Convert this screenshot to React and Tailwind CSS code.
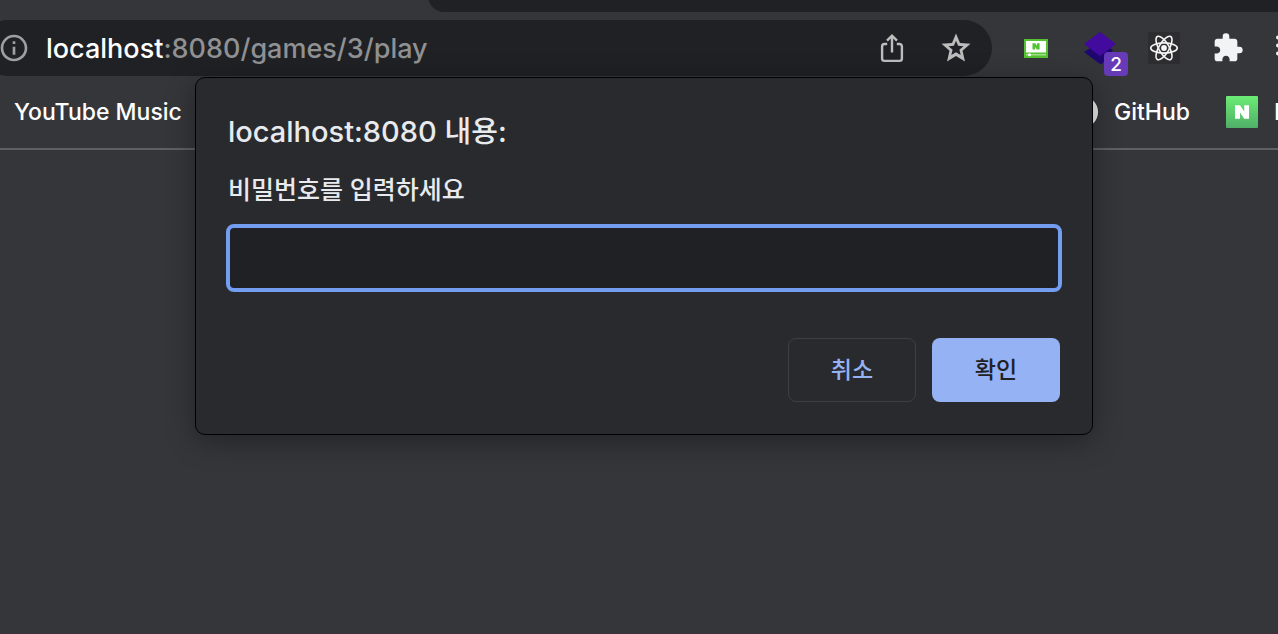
import { MdExtension, MdInfoOutline } from "react-icons/md";

function ShareIcon() {
  return (
    <svg viewBox="0 0 32 32" className="size-8" fill="none" stroke="#bdbdbd" strokeWidth="2.4">
      <path d="M11.2 12H8.500a2.400 2.400 0 0 0-2.400 2.400v12.100a2.400 2.400 0 0 0 2.400 2.400h15a2.400 2.400 0 0 0 2.400-2.400V14.400a2.400 2.400 0 0 0-2.400-2.400h-2.700" />
      <path d="M16 20.500V4M11 8.600l5-5 5 5" />
    </svg>
  );
}

function StarIcon() {
  return (
    <svg viewBox="0 0 32 32" className="size-8" fill="#bdbdbd">
      <path
        fillRule="evenodd"
        d="M16 1.500l4 9.400 10.500.9-8 7 2.500 10.700-9-5.500-9 5.500 2.500-10.700-8-7 10.500-.9zM16 8.800l-2.100 4.900-5.400.5 4.100 3.500-1.300 5.400 4.700-2.900 4.700 2.900-1.300-5.400 4.100-3.500-5.400-.5z"
      />
    </svg>
  );
}

function PlayerIcon() {
  return (
    <svg viewBox="0 0 32 32" className="size-8">
      <path fill="#55c232" d="M4 7h24v19H4z" />
      <path fill="#fff" d="M6 9h20v11.500H6z" />
      <path fill="#55c232" d="M12.500 11.200h2.800l1.700 2.500v-2.500h2.600v6.400h-2.800l-1.700-2.500v2.500h-2.600z" />
      <path fill="#b5e8a3" d="M6 22.200h20v1.200H6z" />
      <circle cx="9.500" cy="22.800" r="1.500" fill="#fff" />
    </svg>
  );
}

function LayersIcon() {
  return (
    <svg viewBox="0 0 32 32" className="size-8">
      <path fill="#1e0870" d="M0 20 8 15h16l5 3-11 14h-2z" />
      <path fill="#430a9e" d="M16 0l16 12-16 12L0 12z" />
    </svg>
  );
}

function ReactIcon() {
  return (
    <svg viewBox="0 0 32 32" className="size-8" fill="none" stroke="#f5f5f5" strokeWidth="1.600">
      <rect width="32" height="32" rx="2" fill="#2d2d30" stroke="none" />
      <circle cx="16" cy="16" r="2.900" fill="#f5f5f5" stroke="none" />
      <ellipse cx="16" cy="16" rx="13.300" ry="5.100" />
      <ellipse cx="16" cy="16" rx="13.300" ry="5.100" transform="rotate(60 16 16)" />
      <ellipse cx="16" cy="16" rx="13.300" ry="5.100" transform="rotate(120 16 16)" />
    </svg>
  );
}

function GreenNIcon() {
  return (
    <svg viewBox="0 0 32 32" className="size-8 shrink-0">
      <defs>
        <linearGradient id="green" x1="0" y1="0" x2="0" y2="1">
          <stop offset="0" stopColor="#6bec75" />
          <stop offset="1" stopColor="#50af68" />
        </linearGradient>
      </defs>
      <rect width="32" height="32" rx="1" fill="url(#green)" />
      <path fill="#fff" d="M9 9.300h5l4.200 6.300V9.300H23v13.400h-4.800L14 16.400v6.300H9z" />
    </svg>
  );
}

function Toolbar() {
  return (
    <div className="flex items-center pt-2">
      <div className="-ml-5 flex h-14 flex-1 items-center rounded-full bg-[#202124] pr-5 pl-[18px]">
        <button aria-label="Site information" className="shrink-0">
          <MdInfoOutline className="size-8 text-[#9aa0a6]" />
        </button>
        <div role="textbox" aria-label="Address" tabIndex={0} className="ml-4 flex-1 pt-px text-[27px] leading-8 font-medium text-[#909193]">
          <span className="text-white">localhost</span>:8080/games/3/play
        </div>
        <button aria-label="Share" className="mr-8"><ShareIcon /></button>
        <button aria-label="Bookmark this page"><StarIcon /></button>
      </div>
      <div className="ml-7 flex shrink-0 items-center gap-8">
        <button aria-label="Player"><PlayerIcon /></button>
        <button aria-label="Layers" className="relative">
          <LayersIcon />
          <span className="absolute top-5 left-5 flex size-6 items-center justify-center rounded bg-[#673ab7] pt-px text-[19px] leading-6 font-medium text-white">2</span>
        </button>
        <button aria-label="React tools"><ReactIcon /></button>
        <button aria-label="Extensions"><MdExtension className="size-8 text-[#f1f3f4]" /></button>
        <button aria-label="Menu" className="w-[2px] overflow-hidden">
          <svg viewBox="0 0 32 32" className="size-8" fill="#f1f3f4">
            <circle cx="2" cy="5.500" r="2" />
            <circle cx="2" cy="13.500" r="2" />
            <circle cx="2" cy="21.500" r="2" />
          </svg>
        </button>
      </div>
    </div>
  );
}

function Bookmarks() {
  return (
    <nav className="flex h-[74px] items-center justify-between overflow-hidden border-b-2 border-[#5f6063] pl-[14px] text-[23px] font-medium text-white">
      <a href="#music">YouTube Music</a>
      <div className="flex shrink-0 items-center">
        <a href="#github" className="flex items-center gap-4">
          <span className="size-8 rounded-full bg-[#ececec]" />
          GitHub
        </a>
        <a href="#n" className="ml-9 flex items-center gap-4">
          <GreenNIcon />
          <span className="w-1 overflow-hidden">N</span>
        </a>
      </div>
    </nav>
  );
}

function PromptDialog() {
  return (
    <form
      role="dialog"
      aria-labelledby="prompt-title"
      className="w-full max-w-[898px] rounded-[10px] border border-black bg-[#292a2d] px-8 pt-9 pb-8 text-[#e8eaed] shadow-[0_6px_28px_rgba(0,0,0,0.35)]"
    >
      <h1 id="prompt-title" className="text-[29px] leading-9 font-medium">localhost:8080 내용:</h1>
      <label htmlFor="password" className="mt-6 block text-[25px] leading-8 font-medium">비밀번호를 입력하세요</label>
      <input
        id="password"
        type="text"
        className="-mx-[2px] mt-[18px] block h-[68px] w-[calc(100%+4px)] rounded-lg border-4 border-[#739df0] bg-[#202124] px-4 text-2xl outline-none"
      />
      <div className="mt-[46px] flex justify-end gap-4 text-[23px] font-medium">
        <button type="button" className="h-16 w-32 rounded-lg border border-[#3c4043] text-[#94b2f4]">취소</button>
        <button type="button" className="h-16 w-32 rounded-lg bg-[#94b2f4] text-[#202124]">확인</button>
      </div>
    </form>
  );
}

export default function App() {
  return (
    <div className="relative flex min-h-screen flex-col overflow-hidden border-b border-[#3d2f3e] bg-[#35363a] font-[Inter,'Noto_Sans_CJK_KR',sans-serif]">
      <header>
        <div className="flex h-3 items-end overflow-hidden pl-[428px]">
          <div className="h-8 flex-1 rounded-bl-2xl bg-[#202124]" />
        </div>
        <Toolbar />
        <Bookmarks />
      </header>
      <main className="absolute inset-x-0 top-[77px] flex justify-center pl-[10px]">
        <PromptDialog />
      </main>
    </div>
  );
}
